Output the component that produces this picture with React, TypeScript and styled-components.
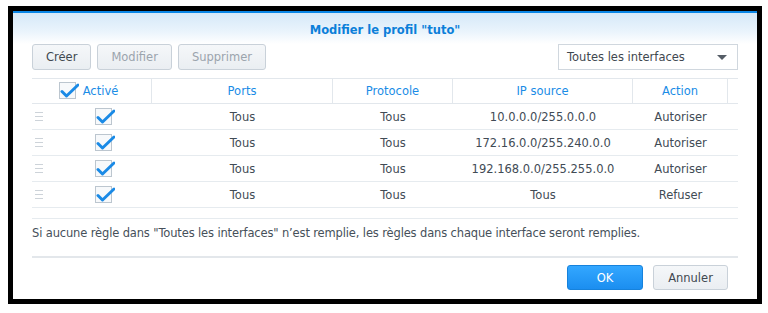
import React from 'react';
import styled, { createGlobalStyle } from 'styled-components';

const GlobalStyle = createGlobalStyle`
  html, body {
    margin: 0;
    padding: 0;
    background: #ffffff;
  }
  body {
    font-family: "DejaVu Sans", Verdana, sans-serif;
    font-size: 11.5px;
    color: #414b55;
  }
`;

type Rule = {
  ports: string;
  protocol: string;
  source: string;
  action: string;
};

const rules: Rule[] = [
  { ports: 'Tous', protocol: 'Tous', source: '10.0.0.0/255.0.0.0', action: 'Autoriser' },
  { ports: 'Tous', protocol: 'Tous', source: '172.16.0.0/255.240.0.0', action: 'Autoriser' },
  { ports: 'Tous', protocol: 'Tous', source: '192.168.0.0/255.255.0.0', action: 'Autoriser' },
  { ports: 'Tous', protocol: 'Tous', source: 'Tous', action: 'Refuser' },
];

const COLUMNS = '120px 181px 120px 180px 95px 1fr';

const Frame = styled.div`
  margin: 6px 0 0 8px;
  width: 744px;
  height: 288px;
  border: 5px solid #000000;
  background: #ffffff;
  display: flex;
  flex-direction: column;
`;

const Header = styled.div`
  height: 31px;
  border-top: 2px solid #0a86e6;
  background: linear-gradient(to bottom, #d5e8f8 0%, #eaf4fc 60%, #ffffff 100%);
  display: flex;
  align-items: center;
  justify-content: center;
`;

const Title = styled.div`
  font-weight: bold;
  font-size: 11.5px;
  color: #0b7fd9;
  padding-top: 2px;
`;

const Body = styled.div`
  padding: 0 19px;
  display: flex;
  flex-direction: column;
`;

const Toolbar = styled.div`
  display: flex;
  align-items: center;
  gap: 6px;
  height: 26px;
`;

const Spacer = styled.div`
  flex: 1;
`;

const Button = styled.button<{ $disabled?: boolean }>`
  height: 26px;
  padding: 0 13px;
  font-family: inherit;
  font-size: 11.5px;
  color: ${({ $disabled }) => ($disabled ? '#9ba4ad' : '#3f4850')};
  background: linear-gradient(to bottom, #f5f7f9, #eaeef2);
  border: 1px solid #c9d1d9;
  border-radius: 3px;
  cursor: default;
`;

const Select = styled.div`
  width: 180px;
  height: 26px;
  box-sizing: border-box;
  border: 1px solid #d0d7de;
  display: flex;
  align-items: center;
  justify-content: space-between;
  padding: 0 10px 0 8px;
  color: #3f4850;
  background: #ffffff;
`;

const Arrow = styled.span`
  width: 0;
  height: 0;
  border-left: 5px solid transparent;
  border-right: 5px solid transparent;
  border-top: 5px solid #555d66;
  margin-top: 1px;
`;

const Grid = styled.div`
  margin-top: 8px;
  border-top: 1px solid #e2e7ec;
  border-bottom: 1px solid #e6ebef;
  height: 139px;
`;

const HeadRow = styled.div`
  display: grid;
  grid-template-columns: ${COLUMNS};
  height: 24px;
  border-bottom: 1px solid #e2e7ec;
`;

const HeadCell = styled.div`
  display: flex;
  align-items: center;
  justify-content: center;
  gap: 4px;
  color: #1a8ce6;
  border-right: 1px solid #e2e7ec;
  &:last-child {
    border-right: none;
  }
`;

const HeadCheck = styled.span`
  display: inline-flex;
  margin-left: -6px;
`;

const Row = styled.div`
  display: grid;
  grid-template-columns: ${COLUMNS};
  height: 25px;
  border-bottom: 1px solid #e6ebef;
`;

const Cell = styled.div`
  display: flex;
  align-items: center;
  justify-content: center;
  color: #414b55;
`;

const EnabledCell = styled.div`
  display: flex;
  align-items: center;
  padding-left: 3px;
`;

const Handle = styled.span`
  width: 8px;
  height: 7px;
  border-top: 1px solid #cdd3d9;
  border-bottom: 1px solid #cdd3d9;
  position: relative;
  &::after {
    content: '';
    position: absolute;
    left: 0;
    right: 0;
    top: 3px;
    height: 1px;
    background: #cdd3d9;
  }
`;

const BoxWrap = styled.span`
  margin-left: 52px;
  display: inline-flex;
`;

const Note = styled.div`
  padding-top: 7px;
  height: 39px;
  box-sizing: border-box;
  color: #46505a;
  letter-spacing: -0.14px;
  border-bottom: 2px solid #e3e7eb;
`;

const Footer = styled.div`
  display: flex;
  justify-content: flex-end;
  gap: 10px;
  padding: 7px 10px 0 0;
`;

const FooterButton = styled.button<{ $primary?: boolean }>`
  width: ${({ $primary }) => ($primary ? '76px' : '75px')};
  height: 25px;
  font-family: inherit;
  font-size: 11.5px;
  border-radius: 3px;
  cursor: default;
  color: ${({ $primary }) => ($primary ? '#ffffff' : '#3f4850')};
  background: ${({ $primary }) =>
    $primary
      ? 'linear-gradient(to bottom, #33a7ff, #1b8ef0)'
      : 'linear-gradient(to bottom, #f5f7f9, #eaeef2)'};
  border: 1px solid ${({ $primary }) => ($primary ? '#1682dc' : '#c9d1d9')};
`;

const CheckBox: React.FC = () => (
  <svg width="20" height="18" viewBox="0 0 20 18">
    <rect x="0.5" y="0.5" width="16" height="16" fill="#f7f9fb" stroke="#bcc6cf" />
    <path d="M3 9.5 L7.5 14 L19 3" fill="none" stroke="#1a8ae6" strokeWidth="3" strokeLinecap="round" strokeLinejoin="round" />
  </svg>
);

export default function App() {
  return (
    <>
      <GlobalStyle />
      <Frame>
        <Header>
          <Title>Modifier le profil "tuto"</Title>
        </Header>
        <Body>
          <Toolbar>
            <Button>Créer</Button>
            <Button $disabled>Modifier</Button>
            <Button $disabled>Supprimer</Button>
            <Spacer />
            <Select>
              Toutes les interfaces
              <Arrow />
            </Select>
          </Toolbar>
          <Grid>
            <HeadRow>
              <HeadCell>
                <HeadCheck>
                  <CheckBox />
                </HeadCheck>
                Activé
              </HeadCell>
              <HeadCell>Ports</HeadCell>
              <HeadCell>Protocole</HeadCell>
              <HeadCell>IP source</HeadCell>
              <HeadCell>Action</HeadCell>
              <HeadCell />
            </HeadRow>
            {rules.map((rule, index) => (
              <Row key={index}>
                <EnabledCell>
                  <Handle />
                  <BoxWrap>
                    <CheckBox />
                  </BoxWrap>
                </EnabledCell>
                <Cell>{rule.ports}</Cell>
                <Cell>{rule.protocol}</Cell>
                <Cell>{rule.source}</Cell>
                <Cell>{rule.action}</Cell>
                <Cell />
              </Row>
            ))}
          </Grid>
          <Note>
            Si aucune règle dans "Toutes les interfaces" n’est remplie, les règles dans chaque interface seront remplies.
          </Note>
          <Footer>
            <FooterButton $primary>OK</FooterButton>
            <FooterButton>Annuler</FooterButton>
          </Footer>
        </Body>
      </Frame>
    </>
  );
}
